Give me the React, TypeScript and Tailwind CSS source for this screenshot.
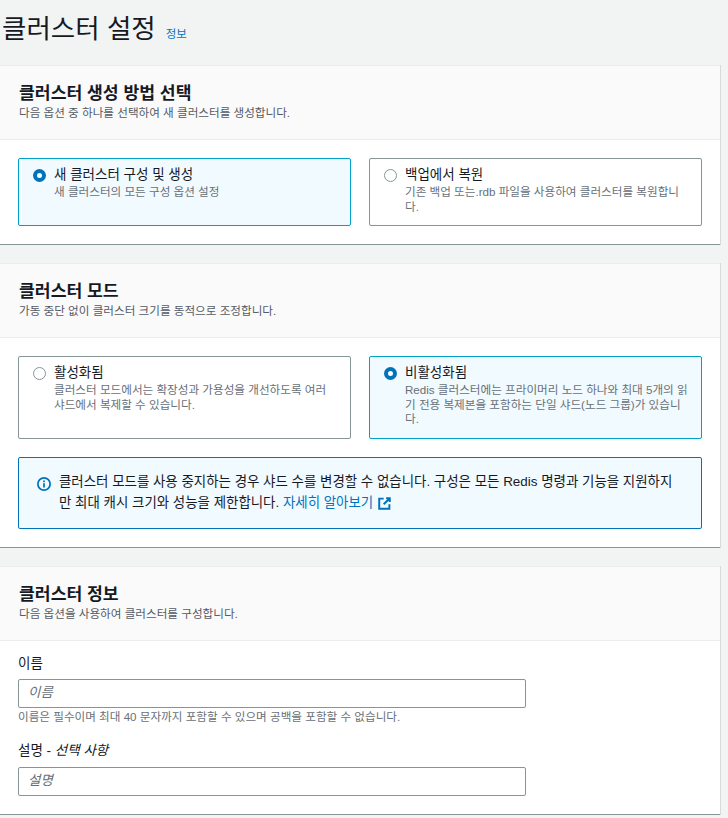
const font = { fontFamily: '"Liberation Sans", "Noto Sans CJK KR", sans-serif' }

function Radio({ on }: { on: boolean }) {
  if (on) {
    return <span className="mt-[4px] block h-[13px] w-[13px] shrink-0 rounded-full border-[4px] border-[#0073bb] bg-white" />
  }
  return <span className="mt-[4px] block h-[13px] w-[13px] shrink-0 rounded-full border border-[#879596] bg-white" />
}

function Tile({ on, title, desc, h }: { on: boolean; title: string; desc: string; h: string }) {
  return (
    <div className={`flex flex-1 gap-[8px] rounded-[2px] border pl-[14px] pr-[13px] pt-[6px] ${h} ${on ? 'border-[#00a1c9] bg-[#f1faff]' : 'border-[#879596] bg-white'}`}>
      <Radio on={on} />
      <div className="min-w-0">
        <div className="text-[13.5px] leading-[19px] text-[#16191f]">{title}</div>
        <div className="mt-[1px] break-all text-[11.6px] leading-[14.5px] text-[#687078]">{desc}</div>
      </div>
    </div>
  )
}

function CardHeader({ title, sub }: { title: string; sub: string }) {
  return (
    <div className="h-[74px] border-b border-[#eaeded] bg-[#fafafa] px-[19px] pt-[15px]">
      <h2 className="text-[17.2px] font-bold leading-[24px] text-[#16191f]">{title}</h2>
      <p className="text-[11.6px] leading-[16px] text-[#545b64]">{sub}</p>
    </div>
  )
}

function Card({ children, className }: { children: React.ReactNode; className?: string }) {
  return (
    <section className={`mr-[8px] border-t border-b border-t-[#eaeded] border-b-[#879596] bg-white shadow-[1px_0_0_#d5dbdb] ${className ?? ''}`}>
      {children}
    </section>
  )
}

export default function App() {
  return (
    <div className="h-[818px] overflow-hidden bg-[#f2f3f3]" style={font}>
      <div className="flex h-[65px] items-start gap-[10px] pl-[2px] pt-[11px]">
        <h1 className="text-[26.5px] leading-[36px] text-[#16191f]">클러스터 설정</h1>
        <a className="mt-[15px] text-[11.5px] leading-[16px] text-[#0073bb]">정보</a>
      </div>

      <Card>
        <CardHeader title="클러스터 생성 방법 선택" sub="다음 옵션 중 하나를 선택하여 새 클러스터를 생성합니다." />
        <div className="flex gap-[18px] p-[18px]">
          <Tile on h="h-[68px]" title="새 클러스터 구성 및 생성" desc="새 클러스터의 모든 구성 옵션 설정" />
          <Tile on={false} h="h-[68px]" title="백업에서 복원" desc="기존 백업 또는.rdb 파일을 사용하여 클러스터를 복원합니다." />
        </div>
      </Card>

      <Card className="mt-[18px]">
        <CardHeader title="클러스터 모드" sub="가동 중단 없이 클러스터 크기를 동적으로 조정합니다." />
        <div className="p-[18px]">
          <div className="flex gap-[18px]">
            <Tile on={false} h="h-[83px]" title="활성화됨" desc="클러스터 모드에서는 확장성과 가용성을 개선하도록 여러 샤드에서 복제할 수 있습니다." />
            <Tile on h="h-[83px]" title="비활성화됨" desc="Redis 클러스터에는 프라이머리 노드 하나와 최대 5개의 읽기 전용 복제본을 포함하는 단일 샤드(노드 그룹)가 있습니다." />
          </div>
          <div className="mt-[18px] flex h-[72px] gap-[8px] rounded-[2px] border border-[#0073bb] bg-[#f1faff] pl-[18px] pr-[24px] pt-[13px]">
            <svg className="mt-[6px] shrink-0" width="14" height="14" viewBox="0 0 16 16" fill="none" stroke="#0073bb" strokeWidth="2">
              <circle cx="8" cy="8" r="7" />
              <path d="M8 7v5M8 4v2" />
            </svg>
            <p className="break-all text-[13.45px] leading-[21px] text-[#16191f]">
              클러스터 모드를 사용 중지하는 경우 샤드 수를 변경할 수 없습니다. 구성은 모든 Redis 명령과 기능을 지원하지만 최대 캐시 크기와 성능을 제한합니다.{' '}
              <a className="text-[#0073bb]">자세히 알아보기</a>
              <svg className="ml-[5px] inline-block align-[-3px]" width="13" height="13" viewBox="0 0 16 16" fill="none" stroke="#0073bb" strokeWidth="2.4">
                <path d="M7 2H1.5v12.5H14V9M10 1.5h4.5V6M14.5 1.5 7 9" />
              </svg>
            </p>
          </div>
        </div>
      </Card>

      <Card className="mt-[18px]">
        <CardHeader title="클러스터 정보" sub="다음 옵션을 사용하여 클러스터를 구성합니다." />
        <div className="px-[18px] pt-[13px]">
          <label className="block text-[13.5px] leading-[20px] text-[#16191f]">이름</label>
          <div className="mt-[5px] flex h-[29px] w-[508px] items-center rounded-[2px] border border-[#879596] bg-white px-[9px] text-[13.5px] italic text-[#687078]">이름</div>
          <p className="mt-[1px] text-[11.6px] leading-[16px] text-[#687078]">이름은 필수이며 최대 40 문자까지 포함할 수 있으며 공백을 포함할 수 없습니다.</p>
          <label className="mt-[16px] block text-[13.5px] leading-[20px] text-[#16191f]">설명 - <i>선택 사항</i></label>
          <div className="mt-[6px] flex h-[29px] w-[508px] items-center rounded-[2px] border border-[#879596] bg-white px-[9px] text-[13.5px] italic text-[#687078]">설명</div>
          <div className="h-[18px]" />
        </div>
      </Card>
    </div>
  )
}
